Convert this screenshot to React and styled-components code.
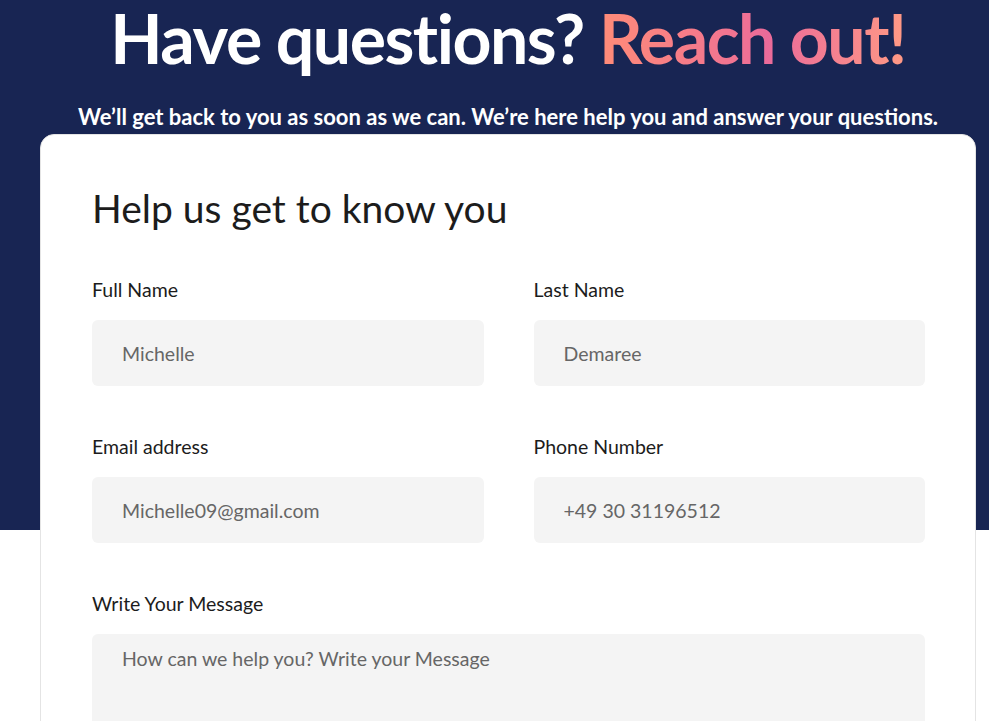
import React from 'react';
import styled, { createGlobalStyle } from 'styled-components';

const GlobalStyle = createGlobalStyle`
  * { box-sizing: border-box; }
  body {
    margin: 0;
    background: #ffffff;
    font-family: "Lato", "Noto Sans", sans-serif;
  }
`

const Page = styled.div`
  min-height: 721px;
  padding-left: 40px;
  background: linear-gradient(#182553 0, #182553 530px, #ffffff 530px);
  overflow: hidden;
`

const Column = styled.div`
  width: 936px;
  display: flex;
  flex-direction: column;
  align-items: center;
`

const Title = styled.h1`
  margin: 0;
  font-size: 68px;
  line-height: 76px;
  font-weight: 700;
  letter-spacing: -1.5px;
  white-space: nowrap;
  color: #ffffff;
  text-align: center;
`

const Accent = styled.span`
  background: linear-gradient(90deg, #ff8c78 0%, #f07392 45%, #ea6a9a 55%, #ff9a85 100%);
  -webkit-background-clip: text;
  background-clip: text;
  color: transparent;
`

const Subtitle = styled.p`
  margin: 28px 0 4px;
  font-size: 22px;
  line-height: 26px;
  font-weight: 700;
  white-space: nowrap;
  color: #ffffff;
  text-align: center;
`

const Card = styled.div`
  width: 936px;
  background: #ffffff;
  border: 1px solid #e4e4e4;
  border-radius: 14px;
  padding: 48px 50px 60px 51px;
`

const CardTitle = styled.h2`
  margin: 0 0 46px;
  font-size: 39px;
  line-height: 50px;
  font-weight: 400;
  color: #1c1c1c;
`

const Grid = styled.div`
  display: grid;
  grid-template-columns: 1fr 1fr;
  column-gap: 50px;
  row-gap: 50px;
`

const Field = styled.label`
  display: flex;
  flex-direction: column;
  gap: 19px;
  grid-column: ${props => (props.$wide ? '1 / -1' : 'auto')};
`

const LabelText = styled.span`
  font-size: 19.5px;
  line-height: 22px;
  color: #1c1c1c;
`

const Input = styled.input`
  height: 66px;
  border: none;
  outline: none;
  border-radius: 6px;
  background: #f4f4f4;
  padding: 0 30px;
  font-family: inherit;
  font-size: 19.5px;
  color: #1c1c1c;
  &::placeholder {
    color: #666666;
  }
`

const TextArea = styled.textarea`
  height: 160px;
  border: none;
  outline: none;
  resize: none;
  border-radius: 6px;
  background: #f4f4f4;
  padding: 13px 30px;
  font-family: inherit;
  font-size: 19.5px;
  line-height: 24px;
  color: #1c1c1c;
  &::placeholder {
    color: #666666;
  }
`

const App = () => {
  return (<>
    <GlobalStyle />
    <Page>
      <Column>
        <Title>Have questions? <Accent>Reach out!</Accent></Title>
        <Subtitle>We’ll get back to you as soon as we can. We’re here help you and answer your questions.</Subtitle>
        <Card>
          <CardTitle>Help us get to know you</CardTitle>
          <Grid>
            <Field>
              <LabelText>Full Name</LabelText>
              <Input type="text" placeholder="Michelle" />
            </Field>
            <Field>
              <LabelText>Last Name</LabelText>
              <Input type="text" placeholder="Demaree" />
            </Field>
            <Field>
              <LabelText>Email address</LabelText>
              <Input type="email" placeholder="Michelle09@gmail.com" />
            </Field>
            <Field>
              <LabelText>Phone Number</LabelText>
              <Input type="tel" placeholder="+49 30 31196512" />
            </Field>
            <Field $wide>
              <LabelText>Write Your Message</LabelText>
              <TextArea placeholder="How can we help you? Write your Message" />
            </Field>
          </Grid>
        </Card>
      </Column>
    </Page>
  </>);
}

export default App;
